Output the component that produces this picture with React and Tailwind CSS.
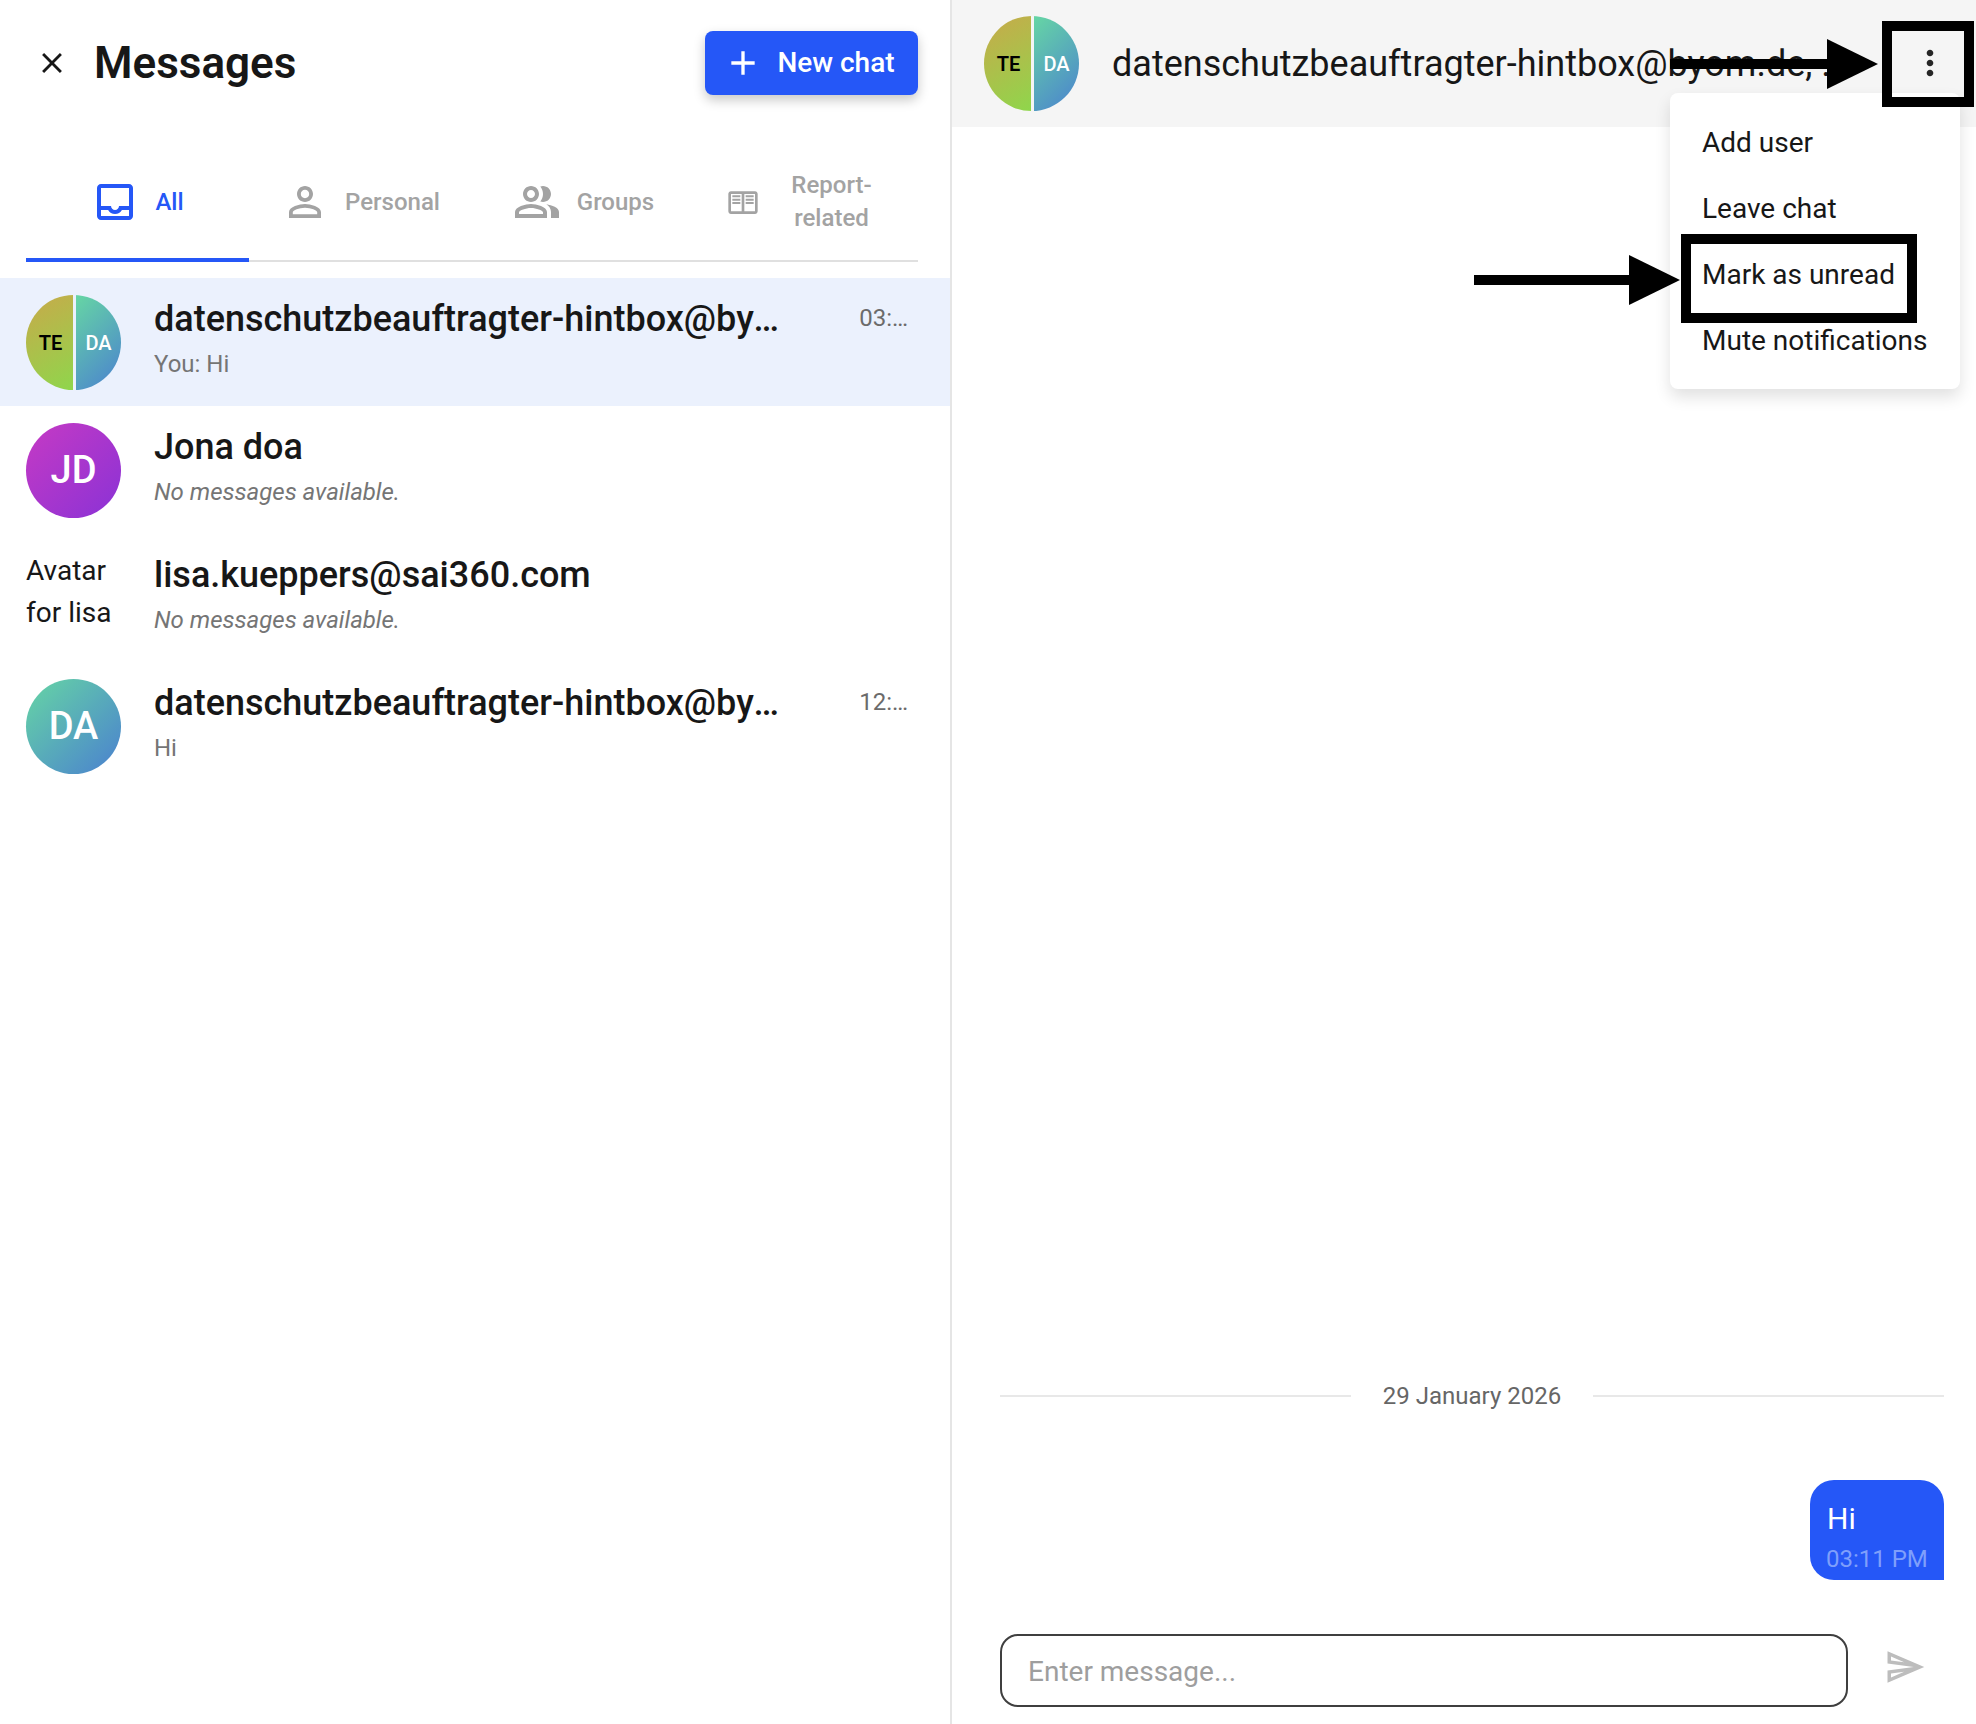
import React from 'react'

const Icon = ({ d, className }) => (
  <svg viewBox="0 0 24 24" fill="currentColor" className={className}>
    <path d={d} />
  </svg>
)

const icons = {
  close: 'M19 6.41 17.59 5 12 10.59 6.41 5 5 6.41 10.59 12 5 17.59 6.41 19 12 13.41 17.59 19 19 17.59 13.41 12z',
  plus: 'M19 13h-6v6h-2v-6H5v-2h6V5h2v6h6v2z',
  inbox: 'M19 3H5c-1.1 0-2 .9-2 2v14c0 1.1.9 2 2 2h14c1.1 0 2-.9 2-2V5c0-1.1-.9-2-2-2zm0 16H5v-3h3.56c.69 1.19 1.97 2 3.45 2s2.75-.81 3.45-2H19v3zm0-5h-4.99c0 1.1-.9 2-2 2s-2-.9-2-2H5V5h14v9z',
  person: 'M12 5.9c1.16 0 2.1.94 2.1 2.1s-.94 2.1-2.1 2.1S9.9 9.16 9.9 8s.94-2.1 2.1-2.1m0 9c2.97 0 6.1 1.46 6.1 2.1v1.1H5.9V17c0-.64 3.13-2.1 6.1-2.1M12 4C9.79 4 8 5.79 8 8s1.79 4 4 4 4-1.79 4-4-1.79-4-4-4zm0 9c-2.67 0-8 1.34-8 4v3h16v-3c0-2.66-5.33-4-8-4z',
  groups: 'M16.67 13.13C18.04 14.06 19 15.32 19 17v3h4v-3c0-2.18-3.57-3.47-6.33-3.87zM15 12c2.21 0 4-1.79 4-4s-1.79-4-4-4c-.47 0-.91.1-1.33.24C14.5 5.27 15 6.58 15 8s-.5 2.73-1.33 3.76c.42.14.86.24 1.33.24zM9 12c2.21 0 4-1.79 4-4s-1.79-4-4-4-4 1.79-4 4 1.79 4 4 4zm0-6c1.1 0 2 .9 2 2s-.9 2-2 2-2-.9-2-2 .9-2 2-2zM9 13c-2.67 0-8 1.34-8 4v3h16v-3c0-2.66-5.33-4-8-4zm6 5H3v-.99C3.2 16.29 6.3 15 9 15s5.8 1.29 6 2v1z',
  report: 'M21 4H3c-1.1 0-2 .9-2 2v13c0 1.1.9 2 2 2h18c1.1 0 2-.9 2-2V6c0-1.1-.9-2-2-2zM3 19V6h8v13H3zm18 0h-8V6h8v13zm-7-9.5h6V11h-6zm0 2.5h6v1.5h-6zm0-5h6v1.5h-6zM4 9.5h6V11H4zm0 2.5h6v1.5H4zm0-5h6v1.5H4z',
  more: 'M12 8c1.1 0 2-.9 2-2s-.9-2-2-2-2 .9-2 2 .9 2 2 2zm0 2c-1.1 0-2 .9-2 2s.9 2 2 2 2-.9 2-2-.9-2-2-2zm0 6c-1.1 0-2 .9-2 2s.9 2 2 2 2-.9 2-2-.9-2-2-2z',
  send: 'M4.01 6.03l7.51 3.22-7.52-1 .01-2.22m7.5 8.72L4 17.97v-2.22l7.51-1M2.01 3L2 10l15 2-15 2 .01 7L23 12 2.01 3z',
}

const SplitAvatar = () => (
  <div className="w-[95px] h-[95px] shrink-0 rounded-full overflow-hidden flex gap-[3px] text-[20px] font-medium">
    <div className="flex-1 flex items-center justify-center pl-[2px] font-semibold bg-[linear-gradient(150deg,#c9a94a,#8fd64c)] text-black">TE</div>
    <div className="flex-1 flex items-center justify-center bg-[linear-gradient(135deg,#66d6a4,#4a80d0)] text-white">DA</div>
  </div>
)

const Avatar = ({ label, gradient }) => (
  <div className={`w-[95px] h-[95px] shrink-0 rounded-full flex items-center justify-center text-white text-[38px] font-medium ${gradient}`}>
    {label}
  </div>
)

const Tab = ({ icon, iconClass, active, extra, children }) => (
  <div className={`w-[223px] h-[110px] pb-[6px] flex items-center justify-center text-[24px] font-medium leading-[33px] ${extra} ${active ? 'text-[#2557f7]' : 'text-[#a3a3a3]'}`}>
    <Icon d={icon} className={iconClass} />
    {children}
  </div>
)

const Row = ({ avatar, name, sub, italic, time, active }) => (
  <div className={`h-[128px] pl-[26px] pr-[42px] pt-[17px] pb-[15px] flex gap-[33px] ${active ? 'bg-[#ebf1fd]' : ''}`}>
    {avatar}
    <div className="flex-1 min-w-0">
      <div className="flex items-start justify-between">
        <div className="w-[626px] truncate text-[36px] leading-[48px] font-medium text-[#171717]">{name}</div>
        {time && <div className="text-[24px] leading-[46px] text-[#6b6b6b]">{time}</div>}
      </div>
      <div className={`mt-[3px] text-[24px] leading-[36px] ${italic ? 'italic text-[#757575]' : 'text-[#757575]'}`}>{sub}</div>
    </div>
  </div>
)

const MenuItem = ({ children }) => (
  <div className="h-[66px] px-[32px] flex items-center text-[28px] text-[#171717] whitespace-nowrap">{children}</div>
)

const Arrow = ({ className, shaft }) => (
  <div className={`absolute flex items-center ${className}`}>
    <div className={`h-[10px] bg-black ${shaft}`} />
    <div className="w-0 h-0 border-y-[25px] border-y-transparent border-l-[51px] border-l-black" />
  </div>
)

export default function App() {
  return (
    <div className="relative w-[1976px] h-[1724px] flex bg-white overflow-hidden font-['Roboto',sans-serif]">
      {/* list of chats */}
      <div className="w-[950px] shrink-0">
        <div className="h-[126px] pl-[26px] pr-[32px] flex items-center">
          <Icon d={icons.close} className="w-[34px] h-[34px] text-[#171717] mr-[25px] ml-[9px]" />
          <h1 className="flex-1 text-[44px] font-semibold text-[#171717]">Messages</h1>
          <div className="w-[213px] h-[64px] pr-[5px] rounded-[8px] bg-[#2557f7] shadow-[0_5px_12px_rgba(0,0,0,0.22)] flex items-center justify-center gap-[14px] text-white text-[28px] font-medium">
            <Icon d={icons.plus} className="w-[40px] h-[40px]" />
            New chat
          </div>
        </div>
        <div className="ml-[26px] mr-[32px] mt-[24px] flex border-b-[2px] border-[#e0e0e0] relative">
          <div className="absolute left-0 bottom-[-2px] w-[223px] h-[4px] bg-[#2557f7]" />
          <Tab icon={icons.inbox} iconClass="w-[48px] h-[48px]" extra="gap-[16px]" active>All</Tab>
          <Tab icon={icons.person} iconClass="w-[48px] h-[48px]" extra="gap-[16px]">Personal</Tab>
          <Tab icon={icons.groups} iconClass="w-[48px] h-[48px]" extra="gap-[16px]">Groups</Tab>
          <Tab icon={icons.report} iconClass="w-[32px] h-[32px]" extra="gap-[32px] pr-[14px]">
            <span className="text-center">Report-<br />related</span>
          </Tab>
        </div>
        <div className="mt-[16px]">
          <Row active avatar={<SplitAvatar />} name="datenschutzbeauftragter-hintbox@byom.de" sub="You: Hi" time="03:…" />
          <Row avatar={<Avatar label="JD" gradient="bg-[linear-gradient(135deg,#c63ac4,#8a32d6)]" />} name="Jona doa" sub="No messages available." italic />
          <Row
            avatar={<div className="w-[95px] shrink-0 -mt-[1px] text-[28px] leading-[42px] text-[#171717]">Avatar for lisa</div>}
            name="lisa.kueppers@sai360.com"
            sub="No messages available."
            italic
          />
          <Row avatar={<Avatar label="DA" gradient="bg-[linear-gradient(135deg,#66d6a4,#4a80d0)]" />} name="datenschutzbeauftragter-hintbox@byom.de" sub="Hi" time="12:…" />
        </div>
      </div>

      {/* open chat */}
      <div className="flex-1 min-w-0 border-l-[2px] border-[#e5e5e5] flex flex-col">
        <div className="h-[127px] shrink-0 bg-[#f5f5f5] pl-[32px] pr-[125px] flex items-center gap-[33px]">
          <SplitAvatar />
          <div className="flex-1 min-w-0 truncate text-[36px] text-[#171717]">datenschutzbeauftragter-hintbox@byom.de, test@example.com</div>
        </div>

        <div className="flex-1 pl-[48px] pr-[32px] flex flex-col justify-end">
          <div className="flex items-center gap-[32px] text-[24px] text-[#666666]">
            <div className="flex-1 h-[2px] bg-[#e8e8e8]" />
            29 January 2026
            <div className="flex-1 h-[2px] bg-[#e8e8e8]" />
          </div>
          <div className="flex justify-end mt-[66px]">
            <div className="w-[134px] h-[100px] pl-[16px] pr-[12px] pt-[18px] rounded-t-[24px] rounded-bl-[24px] bg-[#2557f7]">
              <div className="text-[30px] leading-[42px] text-white pl-[1px]">Hi</div>
              <div className="mt-[3px] text-[24px] leading-[32px] text-[#7f9ffb] whitespace-nowrap">03:11 PM</div>
            </div>
          </div>
        </div>

        <div className="h-[144px] shrink-0 pl-[48px] pr-[32px] pt-[54px] flex items-start">
          <div className="w-[848px] h-[73px] rounded-[18px] border-[2px] border-[#3f3f3f] px-[26px] pt-[2px] flex items-center text-[28px] text-[#9e9e9e]">
            Enter message...
          </div>
          <Icon d={icons.send} className="w-[42px] h-[42px] ml-[36px] mt-[12px] text-[#bdbdbd]" />
        </div>
      </div>

      {/* kebab button */}
      <Icon d={icons.more} className="absolute left-[1910px] top-[43px] w-[40px] h-[40px] text-[#262626]" />

      {/* dropdown menu */}
      <div className="absolute left-[1670px] top-[93px] w-[290px] pt-[17px] pb-[15px] rounded-[8px] bg-white shadow-[0_8px_16px_rgba(0,0,0,0.12)]">
        <MenuItem>Add user</MenuItem>
        <MenuItem>Leave chat</MenuItem>
        <MenuItem>Mark as unread</MenuItem>
        <MenuItem>Mute notifications</MenuItem>
      </div>

      {/* annotations drawn over the screenshot */}
      <div className="absolute left-[1882px] top-[21px] w-[92px] h-[86px] border-[10px] border-black" />
      <div className="absolute left-[1681px] top-[234px] w-[236px] h-[89px] border-[10px] border-black" />
      <Arrow className="left-[1670px] top-[39px]" shaft="w-[157px]" />
      <Arrow className="left-[1474px] top-[255px]" shaft="w-[155px]" />
    </div>
  )
}
